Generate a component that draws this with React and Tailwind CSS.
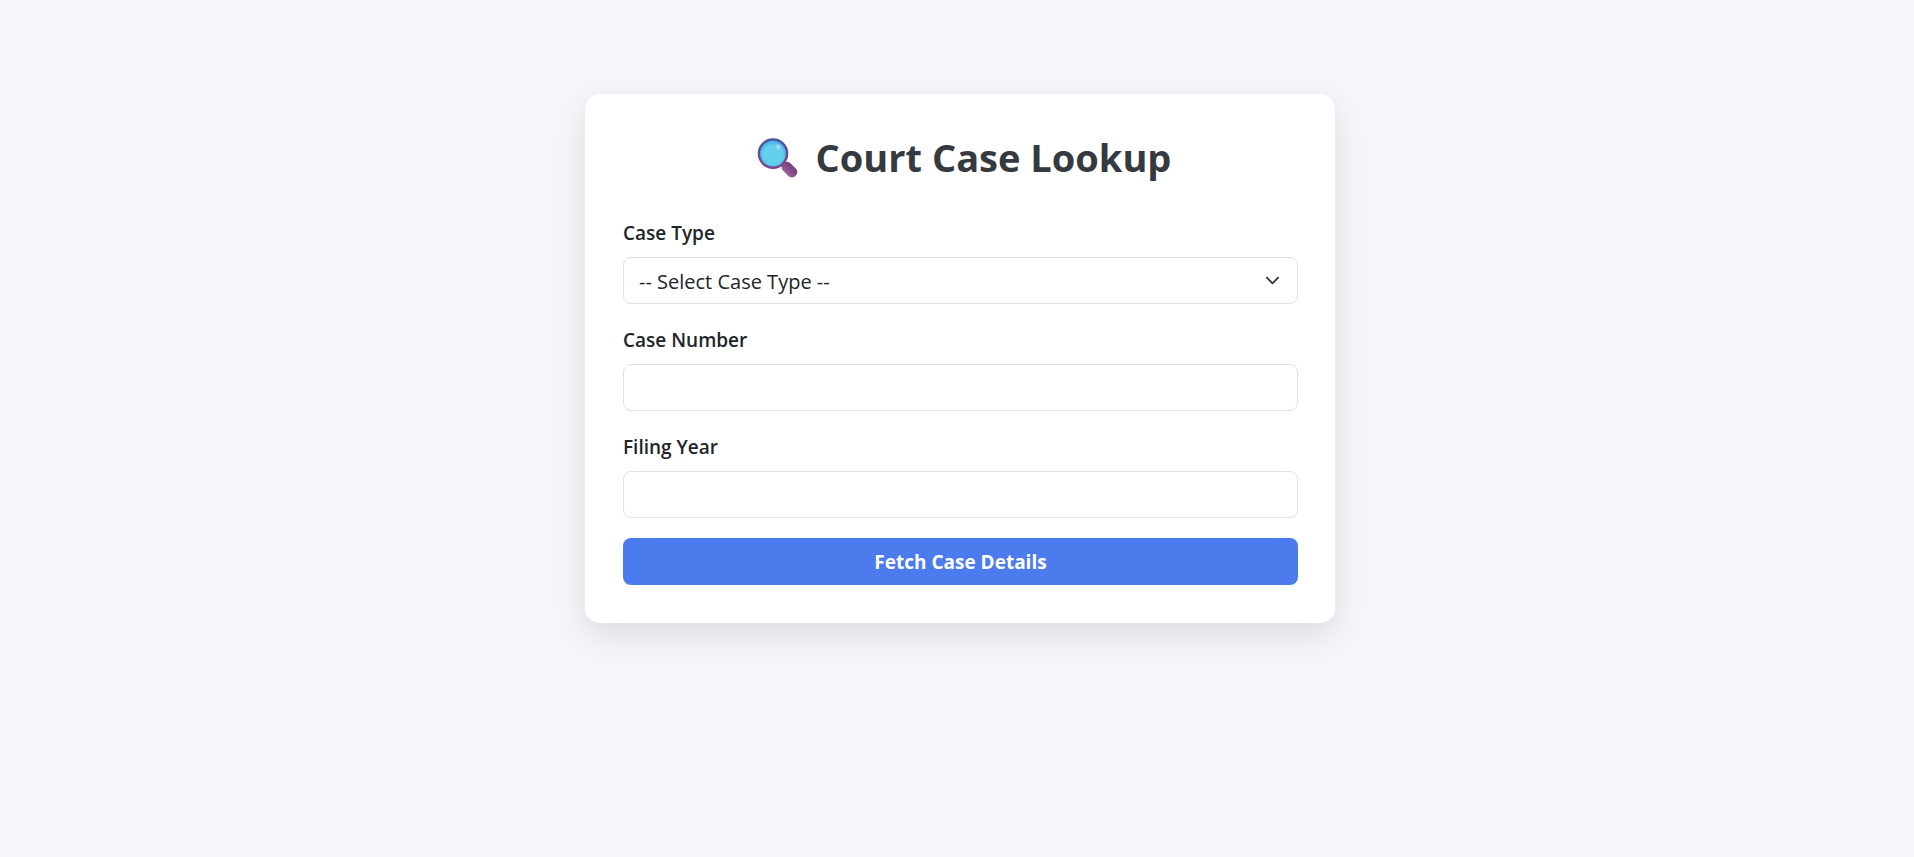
const label = "mb-[9px] block pt-px text-[19px] leading-[30px] font-semibold text-[#212529]";
const field =
  "block h-[47px] w-full rounded-[8px] border border-[#dee2e6] bg-white px-[15px] text-[20px] text-[#212529] outline-none focus:border-[#86b7fe]";

function MagnifierIcon() {
  return (
    <svg viewBox="-8 0 48 40" className="h-10 w-12 shrink-0 overflow-visible" aria-hidden="true">
      <defs>
        <linearGradient id="rim" x1="0" y1="0" x2="0" y2="1">
          <stop offset="0" stopColor="#43599a" />
          <stop offset="1" stopColor="#7b4689" />
        </linearGradient>
        <radialGradient id="lens" cx="0.5" cy="0.55" r="0.5">
          <stop offset="0.75" stopColor="#63cfeb" />
          <stop offset="1" stopColor="#4fb2ee" />
        </radialGradient>
        <linearGradient id="grip" x1="0" y1="0" x2="0" y2="1">
          <stop offset="0" stopColor="#74417d" />
          <stop offset="0.5" stopColor="#874b8b" />
          <stop offset="1" stopColor="#a0629f" />
        </linearGradient>
        <radialGradient id="glint">
          <stop offset="0" stopColor="#b9dcf5" />
          <stop offset="1" stopColor="#8fcdf1" />
        </radialGradient>
      </defs>
      <rect x="22.7" y="27.4" width="17.4" height="10.4" rx="4.6" fill="url(#grip)" transform="rotate(45 31.4 32.6)" />
      <circle cx="15" cy="16.6" r="15.3" fill="url(#rim)" />
      <circle cx="15" cy="16.6" r="12.9" fill="url(#lens)" />
      <circle cx="20.2" cy="9.8" r="2.6" fill="url(#glint)" />
    </svg>
  );
}

export default function App() {
  return (
    <div className="min-h-screen bg-[#f4f6fa] py-[94px] pr-4 pl-[22px] font-['Open_Sans','Noto_Sans',sans-serif]">
      <main className="mx-auto w-full max-w-[750px] rounded-[15px] bg-white py-[38px] pr-[37px] pl-[38px] shadow-[0_12px_31px_rgba(0,0,0,0.1)]">
        <h1 className="mb-9 flex items-center justify-center gap-[18px] pt-px text-[38px] leading-[48px] font-bold text-[#343a40]">
          <MagnifierIcon />
          Court Case Lookup
        </h1>
        <form className="flex flex-col gap-5" onSubmit={(e) => e.preventDefault()}>
          <div>
            <label htmlFor="case-type" className={label}>Case Type</label>
            <div className="relative">
              <select id="case-type" defaultValue="" className={`${field} appearance-none pt-0.5`}>
                <option value="">-- Select Case Type --</option>
              </select>
              <svg
                viewBox="0 0 16 16"
                className="pointer-events-none absolute top-4 right-[18px] size-[15px]"
                fill="none"
                stroke="#343a40"
                strokeWidth="2"
                strokeLinecap="round"
                strokeLinejoin="round"
                aria-hidden="true"
              >
                <path d="m2 5 6 6 6-6" />
              </svg>
            </div>
          </div>
          <div>
            <label htmlFor="case-number" className={label}>Case Number</label>
            <input id="case-number" type="text" className={field} />
          </div>
          <div>
            <label htmlFor="filing-year" className={label}>Filing Year</label>
            <input id="filing-year" type="text" className={field} />
          </div>
          <button type="submit" className="h-[47px] w-full rounded-[8px] bg-[#4b7bec] pt-0.5 text-[19px] font-bold text-white">
            Fetch Case Details
          </button>
        </form>
      </main>
    </div>
  );
}
